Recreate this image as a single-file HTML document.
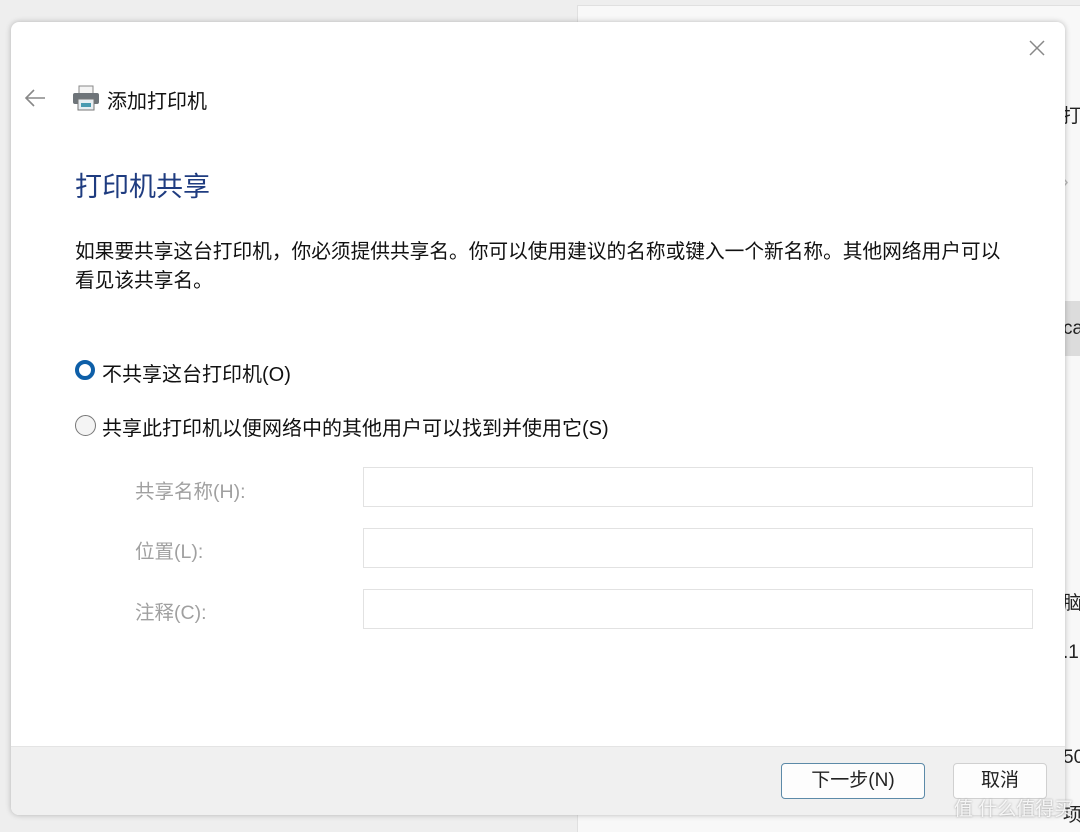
<!DOCTYPE html>
<html><head><meta charset="utf-8"><style>
body{margin:0;width:1080px;height:831px;background:#eeeeee;position:relative;overflow:hidden;font-family:"Liberation Sans","Noto Sans CJK SC",sans-serif;}
.bgwin{position:absolute;left:577px;top:5px;width:503px;height:826px;background:#f8f8f8;border-left:1px solid #e0e0e0;border-top:1px solid #e0e0e0;}
.dlg{position:absolute;left:11px;top:22px;width:1054px;height:793px;background:#fff;border-radius:8px;box-shadow:0 0 6px rgba(0,0,0,.25);overflow:hidden;}
.t{position:absolute;white-space:nowrap;}
.foot{position:absolute;left:0;top:724px;width:100%;height:69px;background:#f0f0f0;border-top:1px solid #e4e4e4;}
.btn{position:absolute;top:16px;height:34px;border-radius:4px;background:#fdfdfd;border:1px solid #d0d0d0;font-size:18px;text-align:center;line-height:34px;color:#222;}
.inp{position:absolute;left:352px;width:668px;height:38px;border:1px solid #e2e2e2;background:#fff;}
.lbl{position:absolute;left:124px;font-size:19.5px;color:#a0a0a0;}
</style></head><body>
<div class="bgwin">
<div class="t" style="left:484px;top:95px;font-size:19px;color:#222">打印</div>
<div class="t" style="left:484px;top:165px;font-size:20px;color:#bbb">›</div>
<div style="position:absolute;left:470px;top:295px;width:40px;height:55px;background:#dcdcdc"></div>
<div class="t" style="left:485px;top:312px;font-size:19px;color:#222">ca</div>
<div class="t" style="left:485px;top:582px;font-size:19px;color:#222">脑</div>
<div class="t" style="left:485px;top:636px;font-size:19px;color:#222">.1</div>
<div class="t" style="left:485px;top:741px;font-size:19px;color:#222">50</div>
<div class="t" style="left:485px;top:794px;font-size:19px;color:#222">项</div>
</div>
<div class="dlg">
<svg style="position:absolute;left:1016px;top:16px" width="20" height="20" viewBox="0 0 20 20"><path d="M3 3L17 17M17 3L3 17" stroke="#888" stroke-width="1.5"/></svg>
<svg style="position:absolute;left:12px;top:66px" width="24" height="20" viewBox="0 0 24 20"><path d="M22 10H3M11 2L3 10L11 18" stroke="#888" stroke-width="1.6" fill="none"/></svg>
<svg style="position:absolute;left:60px;top:62px" width="30" height="28" viewBox="0 0 30 28"><rect x="8" y="2" width="14" height="8" fill="#f4f4f4" stroke="#888"/><rect x="2" y="9" width="26" height="11" rx="2" fill="#6e7479"/><rect x="7" y="15" width="16" height="11" fill="#e8eef2" stroke="#777"/><rect x="10" y="19" width="10" height="4" fill="#4a9ab0"/></svg>
<div class="t" style="left:96px;top:63px;font-size:20px;color:#111">添加打印机</div>
<div class="t" style="left:64px;top:143px;font-size:27px;color:#1f3c80">打印机共享</div>
<div class="t" style="left:64px;top:216px;font-size:19.7px;color:#111;line-height:29px">如果要共享这台打印机，你必须提供共享名。你可以使用建议的名称或键入一个新名称。其他网络用户可以<br>看见该共享名。</div>
<div style="position:absolute;left:64px;top:338px;width:12px;height:12px;border-radius:50%;border:4.5px solid #0e5fa8;background:#fff"></div>
<div class="t" style="left:91px;top:336px;font-size:20px;color:#111">不共享这台打印机(O)</div>
<div style="position:absolute;left:64px;top:393px;width:19px;height:19px;border-radius:50%;border:1px solid #777;background:#f4f4f4"></div>
<div class="t" style="left:91px;top:390px;font-size:20px;color:#111">共享此打印机以便网络中的其他用户可以找到并使用它(S)</div>
<div class="lbl t" style="top:453px">共享名称(H):</div>
<div class="lbl t" style="top:513px">位置(L):</div>
<div class="lbl t" style="top:574px">注释(C):</div>
<div class="inp" style="top:445px"></div>
<div class="inp" style="top:506px"></div>
<div class="inp" style="top:567px"></div>
<div class="foot">
<div class="btn" style="left:770px;width:142px;border:1px solid #5c8aa8;font-size:19px">下一步(N)</div>
<div class="btn" style="left:942px;width:92px;font-size:19px">取消</div>
</div>
</div>
<div class="t" style="left:954px;top:794px;font-size:19px;color:rgba(255,255,255,.85);text-shadow:0 0 2px #999">值 什么值得买</div>
</body></html>
